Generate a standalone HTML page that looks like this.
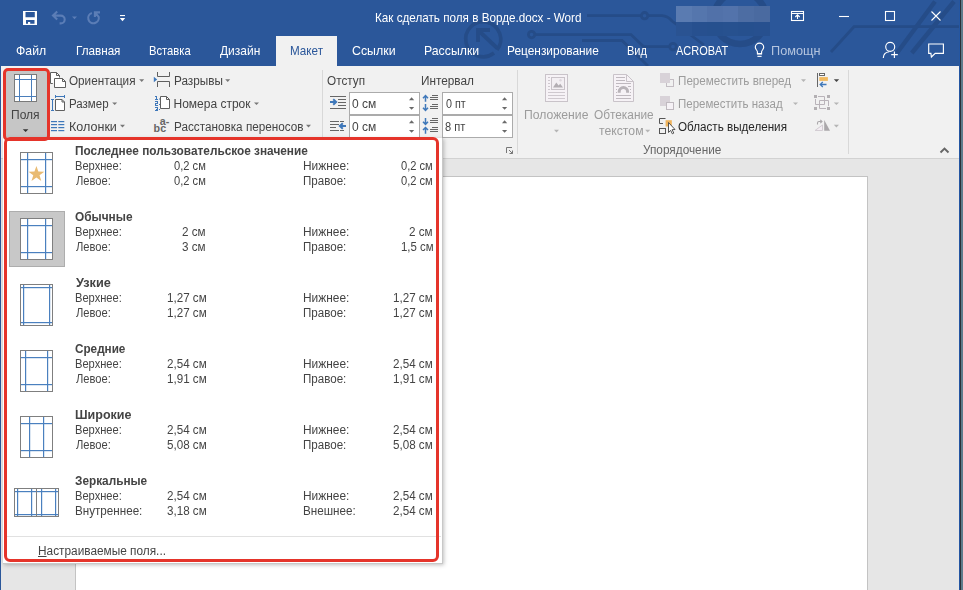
<!DOCTYPE html>
<html lang="ru">
<head>
<meta charset="utf-8">
<title>Как сделать поля в Ворде.docx - Word</title>
<style>
html,body{margin:0;padding:0;}
body{width:963px;height:590px;overflow:hidden;position:relative;background:#e6e6e6;font-family:"Liberation Sans",sans-serif;}
#bg,#fg{position:absolute;left:0;top:0;width:963px;height:590px;display:block;}
#txt{position:absolute;left:0;top:0;width:963px;height:590px;will-change:transform;}
.t{position:absolute;white-space:nowrap;transform-origin:0 0;}
.t u{text-decoration:underline;text-underline-offset:0.5px;}
#menu{position:absolute;left:3px;top:138px;width:440px;height:426px;background:#fff;box-shadow:1px 1px 4px rgba(0,0,0,.25);border-right:1px solid #c8c8c8;border-bottom:1px solid #c8c8c8;box-sizing:border-box;}
.red{position:absolute;border:3px solid #e5342a;box-sizing:border-box;}
</style>
</head>
<body>
<svg id="bg" width="963" height="590" viewBox="0 0 963 590">
<!-- title + tabs -->
<rect x="0" y="0" width="960" height="66" fill="#2b579a"/>
<g fill="none" stroke="#254c88" stroke-width="2.8">
  <path d="M497 50 A17.5 17.5 0 1 0 494 53" stroke-width="3.6"/>
  <path d="M497 48 L479 31 M478 42 V30 H490" stroke-width="3.8"/>
  <path d="M587 15.7 H641 M648 15.7 H662 Q667.500 16 672 21 L704 45"/>
  <circle cx="644.6" cy="15.7" r="3.2"/>
  <circle cx="531.6" cy="34.6" r="3.2"/>
  <path d="M535 34.6 H631 L643.500 46.600 H669.500"/>
  <circle cx="673" cy="46.600" r="3.300"/>
  <path d="M582 40.5 H622 L648 66"/>
  <circle cx="740" cy="18" r="26" stroke-width="6.500"/>
  <path d="M831 52 L854 26.7 H960"/>
  <path d="M935 1.500 L897 53 M954 1.500 L911.800 53" stroke-width="4.400"/>
</g>
<rect x="676.0" y="6" width="15.7" height="16.300" shape-rendering="crispEdges" fill="#5a7bb1"/><rect x="676.0" y="22.300" width="15.7" height="14" shape-rendering="crispEdges" fill="#2a5392"/>
<rect x="691.6" y="6" width="15.7" height="16.300" shape-rendering="crispEdges" fill="#5576ad"/><rect x="691.6" y="22.300" width="15.7" height="14" shape-rendering="crispEdges" fill="#27508f"/>
<rect x="707.2" y="6" width="15.7" height="16.300" shape-rendering="crispEdges" fill="#5171a9"/><rect x="707.2" y="22.300" width="15.7" height="14" shape-rendering="crispEdges" fill="#26508e"/>
<rect x="722.8" y="6" width="15.7" height="16.300" shape-rendering="crispEdges" fill="#5373ab"/><rect x="722.8" y="22.300" width="15.7" height="14" shape-rendering="crispEdges" fill="#27518f"/>
<rect x="738.4" y="6" width="15.7" height="16.300" shape-rendering="crispEdges" fill="#4d6da3"/><rect x="738.4" y="22.300" width="15.7" height="14" shape-rendering="crispEdges" fill="#26508e"/>
<rect x="754.0" y="6" width="15.7" height="16.300" shape-rendering="crispEdges" fill="#4a6aa0"/><rect x="754.0" y="22.300" width="15.7" height="14" shape-rendering="crispEdges" fill="#27508f"/>
<!-- active tab -->
<rect x="276" y="36" width="61" height="30" fill="#f1f1f1"/>
<!-- ribbon -->
<rect x="1" y="66" width="958" height="92" fill="#f1f1f1"/>
<rect x="1" y="158" width="958" height="1" fill="#d2d2d2"/>
<!-- doc area -->
<rect x="1" y="159" width="958" height="431" fill="#e6e6e6"/>
<rect x="75.5" y="176.5" width="792" height="420" fill="#fff" stroke="#c3c3c3"/>
<!-- window edges -->
<rect x="0" y="0" width="1" height="590" fill="#2b579a"/>
<rect x="959" y="0" width="1" height="590" fill="#2456a2"/>
<rect x="960" y="0" width="1" height="590" fill="#2b3038"/>
<rect x="961" y="0" width="2" height="590" fill="#5e7b8b"/>
<!-- quick access toolbar -->
<g fill="#fff">
  <path d="M23 11 H37 V25 H23 Z M25.5 12 V17.2 H34.8 V12 Z M26 20 V23.8 H34.5 V20 Z" fill-rule="evenodd"/>
  <rect x="28" y="22" width="2.2" height="2"/>
  <rect x="120" y="15" width="5" height="1.1"/>
  <path d="M119.8 18 H125.2 L122.5 21.2 Z"/>
</g>
<g fill="none" stroke="#5b7db6" stroke-width="2.1">
  <path d="M57.2 11.6 L53 15.6 L57.2 19.6 M53.6 15.6 H60.8 A3.9 3.9 0 0 1 60.8 23.4 H59.6"/>
  <path d="M91.9 12.9 A5.3 5.3 0 1 0 98.7 16.9 L95.4 13 M100 12.4 H94.9 V17"/>
</g>
<path d="M72 16.6 H77 L74.5 19.2 Z" fill="#5b7db6"/>
<!-- window controls -->
<g fill="none" stroke="#fff" stroke-width="1.1">
  <rect x="791.5" y="11.5" width="12" height="9"/>
  <path d="M791.5 13.5 H803.5 M797.5 19 V15 M795.3 17 L797.5 14.8 L799.7 17"/>
  <path d="M839 16.5 H849"/>
  <rect x="885.5" y="11.5" width="9" height="9"/>
  <path d="M931.5 11.5 L940.5 20.5 M940.5 11.5 L931.5 20.5"/>
</g>
<!-- tab row icons -->
<g fill="none" stroke="#fff" stroke-width="1.15">
  <path d="M757.4 53.2 V51.8 C757.4 50.300 755.300 49.500 755.300 47.300 A4.200 4.200 0 0 1 763.700 47.300 C763.700 49.500 761.600 50.300 761.600 51.800 V53.2"/>
  <circle cx="890.2" cy="46.8" r="4.5"/>
  <path d="M883.300 58 C883.400 54.200 885.800 52 889.200 51.700 M891.200 54.600 H897.800 M894.400 51.600 V58"/>
  <path d="M928.7 44 H943.4 V53.300 H935.2 L931.400 57 L930.900 53.300 H928.7 Z"/>
</g>
<g fill="#fff"><rect x="756.9" y="53" width="5.200" height="1.600"/><rect x="757.4" y="55.800" width="4.200" height="1.100"/></g>
<!-- Поля button -->
<rect x="6" y="71" width="41" height="66" fill="#c6c6c6"/>
<rect x="14.5" y="74.5" width="22" height="27" fill="#fff" stroke="#7a7a7a"/>
<g fill="#4a7ebb"><rect x="19" y="75" width="1" height="26"/><rect x="31" y="75" width="1" height="26"/><rect x="15" y="79" width="21" height="1"/><rect x="15" y="96" width="21" height="1"/></g>
<path d="M22.8 129.2 H28.4 L25.6 132 Z" fill="#333"/>
<!-- orientation -->
<g fill="#fff" stroke="#5f5f5f" stroke-width="1">
  <path d="M52.8 83.5 H50.5 V72.5 H56.5 L59.5 75.5 V77.5" />
  <path d="M56.5 72.5 V75.5 H59.5" fill="none"/>
  <path d="M54.5 78.5 H62.5 L65.5 81.5 V87.5 H54.5 Z"/>
  <path d="M62.5 78.5 V81.5 H65.5" fill="none"/>
</g>
<!-- size -->
<g fill="#fff" stroke="#5f5f5f" stroke-width="1">
  <path d="M55.5 99.5 H62 L64.5 102 V110.5 H55.5 Z"/>
  <path d="M62 99.5 V102 H64.5" fill="none"/>
</g>
<g fill="#3f78ba"><rect x="52" y="99" width="1" height="12"/><rect x="51" y="99" width="3" height="1"/><rect x="51" y="110" width="3" height="1"/>
<rect x="55" y="96" width="10" height="1"/><rect x="55" y="95" width="1" height="3"/><rect x="64" y="95" width="1" height="3"/></g>
<!-- columns -->
<g fill="#3f78ba">
<rect x="51" y="121" width="6" height="1.2"/><rect x="58.3" y="121" width="6" height="1.2"/>
<rect x="51" y="124" width="6" height="1.2"/><rect x="58.3" y="124" width="6" height="1.2"/>
<rect x="51" y="127" width="6" height="1.2"/><rect x="58.3" y="127" width="6" height="1.2"/>
<rect x="51" y="130" width="6" height="1.2"/><rect x="58.3" y="130" width="6" height="1.2"/>
</g>
<!-- dropdown arrows (dark gray) -->
<g fill="#777">
<path d="M139.2 79.3 H144.2 L141.7 82 Z"/>
<path d="M112.2 102.4 H117.2 L114.7 105.1 Z"/>
<path d="M120 124.8 H125 L122.5 127.5 Z"/>
<path d="M225.2 79.3 H230.2 L227.7 82 Z"/>
<path d="M254 102.4 H259 L256.5 105.1 Z"/>
<path d="M306 124.8 H311 L308.5 127.5 Z"/>
</g>
<!-- breaks -->
<g fill="none" stroke="#5f5f5f" stroke-width="1">
  <path d="M157.5 72 V76.5 H169.5 V72"/>
  <path d="M157.5 87 V81.5 H169.5 V87"/>
</g>
<path d="M153.8 76.8 L157.2 79.5 L153.8 82.2 Z" fill="#3f78ba"/>
<!-- line numbers -->
<g fill="#fff" stroke="#5f5f5f" stroke-width="1">
  <path d="M160.5 96.5 H166.5 L169.5 99.5 V108.5 H160.5 Z"/>
  <path d="M166.5 96.5 V99.5 H169.5" fill="none"/>
</g>
<g fill="#3f78ba">
<rect x="155" y="96" width="2" height="1"/><rect x="156" y="97" width="1" height="2"/><rect x="155" y="99" width="3" height="1"/>
<rect x="155" y="101" width="3" height="1"/><rect x="157" y="102" width="1" height="1"/><rect x="155" y="103" width="3" height="1"/><rect x="155" y="104" width="1" height="1"/><rect x="155" y="105" width="3" height="1"/>
<rect x="155" y="107" width="3" height="1"/><rect x="157" y="108" width="1" height="1"/><rect x="156" y="109" width="2" height="1"/><rect x="155" y="110" width="3" height="1"/>
<rect x="159" y="98.5" width="1" height="1"/><rect x="159" y="104" width="1" height="1"/><rect x="159" y="109" width="1" height="1"/>
</g>
<!-- hyphenation -->
<g font-family="Liberation Sans, sans-serif" fill="#666" font-weight="bold">
<text x="153.6" y="132" font-size="11.5" textLength="12.5" lengthAdjust="spacingAndGlyphs">bc</text>
<text x="159.8" y="125" font-size="10" textLength="9.5" lengthAdjust="spacingAndGlyphs">a-</text>
</g>
<!-- separators -->
<g fill="#d8d8d8">
<rect x="322" y="70" width="1" height="84"/>
<rect x="517" y="70" width="1" height="84"/>
<rect x="848" y="70" width="1" height="84"/>
</g>
<!-- indent inputs -->
<g fill="#fff" stroke="#ababab">
<rect x="349.5" y="92.5" width="70" height="22"/>
<rect x="349.5" y="115.5" width="70" height="22"/>
<rect x="442.5" y="92.5" width="70" height="22"/>
<rect x="442.5" y="115.5" width="70" height="22"/>
</g>
<g fill="#6a6a6a">
<path d="M409 100.2 H414.2 L411.6 97.3 Z"/><path d="M409 106.9 H414.2 L411.6 109.8 Z"/>
<path d="M409 123.2 H414.2 L411.6 120.3 Z"/><path d="M409 129.9 H414.2 L411.6 132.8 Z"/>
<path d="M502 100.2 H507.2 L504.6 97.3 Z"/><path d="M502 106.9 H507.2 L504.6 109.8 Z"/>
<path d="M502 123.2 H507.2 L504.6 120.3 Z"/><path d="M502 129.9 H507.2 L504.6 132.8 Z"/>
</g>
<!-- indent icons -->
<g fill="#666">
<rect x="330" y="96" width="16" height="1"/><rect x="338" y="99" width="8" height="1"/><rect x="338" y="102" width="8" height="1"/><rect x="338" y="105" width="8" height="1"/><rect x="330" y="108" width="16" height="1"/>
<rect x="330" y="121" width="9" height="1"/><rect x="340" y="121" width="4" height="1"/><rect x="330" y="124" width="9" height="1"/><rect x="330" y="127" width="6" height="1"/><rect x="330" y="130" width="9" height="1"/><rect x="340" y="130" width="4" height="1"/>
</g>
<g fill="none" stroke="#3f78ba" stroke-width="1.9">
<path d="M330 102 H336 M333.2 99.200 L336.200 102 L333.2 104.800"/>
<path d="M346 126 H340 M342.800 123.200 L339.800 126 L342.800 128.800"/>
</g>
<!-- spacing icons -->
<g fill="#666">
<rect x="432" y="95" width="6" height="1"/><rect x="430" y="97" width="8" height="1"/><rect x="430" y="99" width="8" height="1"/>
<rect x="432" y="104" width="6" height="1"/><rect x="430" y="106" width="8" height="1"/><rect x="430" y="108" width="8" height="1"/>
<rect x="432" y="118" width="6" height="1"/><rect x="430" y="120" width="8" height="1"/><rect x="430" y="122" width="8" height="1"/>
<rect x="432" y="127" width="6" height="1"/><rect x="430" y="129" width="8" height="1"/><rect x="430" y="131" width="8" height="1"/>
</g>
<g fill="none" stroke="#3f78ba" stroke-width="1.5">
<path d="M425.5 101.700 V95.500 M423 98.200 L425.5 95.600 L428 98.200"/>
<path d="M425.5 104 V110.500 M423 107.800 L425.5 110.400 L428 107.800"/>
<path d="M425.5 118 V124.400 M423 121.700 L425.5 124.300 L428 121.700"/>
<path d="M425.5 133.700 V127.400 M423 130.100 L425.5 127.500 L428 130.100"/>
</g>
<!-- dialog launcher -->
<g fill="none" stroke="#777" stroke-width="1">
<path d="M506.5 153 V147.5 H512"/>
<path d="M509 150 L512.5 153.5 M512.5 150.5 V153.5 H509.5"/>
</g>
<!-- Position icon -->
<g fill="none" stroke="#c9c3c9" stroke-width="1">
<rect x="545.5" y="74.5" width="22" height="27" fill="#f6f2f6"/>
<rect x="551.5" y="77.5" width="13" height="12" fill="#f3eff3"/>
<path d="M548 77.5 H550 M548 80.5 H550 M548 83.5 H550 M548 86.5 H550 M548 89.5 H550 M548 92.5 H565 M548 95.5 H565 M548 98.5 H565" stroke="#cfc9cf"/>
</g>
<path d="M553 87.5 L556.3 82.6 L558.6 85.6 L560.2 83.8 L563 87.5 Z" fill="#b3aeb3"/>
<circle cx="560.5" cy="80.3" r="1.2" fill="#ddd7dd"/>
<!-- Wrap icon -->
<g fill="none" stroke="#c9c3c9" stroke-width="1">
<path d="M613.5 74.5 H626.5 L633.5 81.500 V101.5 H613.5 Z" fill="#f6f2f6"/>
<path d="M626.5 74.5 V81.500 H633.5"/>
<path d="M616 77.5 H625 M616 80.5 H625 M616 83.5 H631 M616 95.500 H631 M616 98.5 H631 M616 86.5 H619 M628 86.5 H631 M616 89.5 H617 M630 89.5 H631 M616 92.5 H617 M630 92.5 H631" stroke="#bfb9bf"/>
</g>
<path d="M619.2 92.800 V91.800 A4.200 4.200 0 0 1 627.600 91.800 V92.800" fill="none" stroke="#b8b3b8" stroke-width="3"/>
<g fill="#b5b5b5">
<path d="M554 129.8 H559 L556.500 132.500 Z"/>
<path d="M645.2 129.8 H650.2 L647.7 132.500 Z"/>
<path d="M801 79.3 H806 L803.5 82 Z"/>
<path d="M793 102.400 H798 L795.5 105.1 Z"/>
<path d="M833.8 102.400 H839 L836.400 105.1 Z"/>
<path d="M833.8 124.800 H839 L836.400 127.5 Z"/>
</g>
<path d="M833.8 79.3 H839.200 L836.5 82 Z" fill="#444"/>
<!-- bring forward / send back -->
<rect x="666.5" y="79.500" width="7" height="7" fill="none" stroke="#c3bdc3"/>
<rect x="660" y="73" width="10" height="10" fill="#d8d2d8"/>
<rect x="660" y="96" width="10" height="10" fill="#d8d2d8"/>
<rect x="666.5" y="102.500" width="7" height="7" fill="#f6f2f6" stroke="#bfb9bf"/>
<!-- selection pane -->
<g fill="none" stroke="#555" stroke-width="1">
<path d="M665.500 118.5 H659.5 V123.5 H663"/>
<rect x="659.5" y="128.500" width="6" height="5"/>
</g>
<rect x="665.600" y="120.200" width="6.200" height="6.300" fill="#f0b45c"/>
<path d="M668.500 122.500 V132.500 L670.600 130.300 L672.300 133.800 L673.800 133.100 L672.100 129.700 L675 129.500 Z" fill="#fff" stroke="#444" stroke-width="0.900"/>
<!-- align -->
<rect x="817" y="73" width="1" height="14" fill="#666"/>
<rect x="819.5" y="73.500" width="5" height="2" fill="#fff" stroke="#666"/>
<rect x="819.300" y="77.100" width="8.600" height="3.800" fill="#f0b95f"/>
<path d="M826.500 84.500 H820.200 M822.800 82 L820.200 84.500 L822.800 87" fill="none" stroke="#3f78ba" stroke-width="1.300"/>
<!-- group -->
<g fill="#b3b0b3">
<rect x="814" y="95" width="3" height="3"/><rect x="827" y="95" width="3" height="3"/><rect x="814" y="107" width="3" height="3"/><rect x="827" y="107" width="3" height="3"/>
</g>
<g fill="none" stroke="#b9b3b9" stroke-width="1">
<path d="M818 96.500 H824.500 V104.500 H815.500 V99"/>
<path d="M826 108.500 H819.500 V100.500 H828.500 V106"/>
</g>
<!-- rotate -->
<path d="M824.200 120 L830 130.800 H824.200 Z" fill="#aaa7aa"/>
<path d="M822.500 125 V130.500 H815 Z" fill="#f3edf3" stroke="#d3cdd3"/>
<path d="M817.500 124.500 V123 Q817.500 121.500 819 121.500 H821.800 M820.300 119.800 L822 121.500 L820.300 123.200" fill="none" stroke="#aaa7aa" stroke-width="1.100"/>
<!-- collapse caret -->
<path d="M940.500 152.500 L944.500 148.500 L948.500 152.500" fill="none" stroke="#666" stroke-width="1.900"/>

</svg>
<div id="menu"></div>
<svg id="fg" width="963" height="590" viewBox="0 0 963 590">
<rect x="9.5" y="211.5" width="55" height="55" fill="#c8c8c8" stroke="#adadad"/>
<rect x="20.5" y="152.5" width="32" height="41" fill="#fff" stroke="#7f7f7f"/>
<rect x="27" y="153" width="1.2" height="40" fill="#4a80bf"/>
<rect x="45" y="153" width="1.2" height="40" fill="#4a80bf"/>
<rect x="21" y="159" width="31" height="1.2" fill="#4a80bf"/>
<rect x="21" y="186" width="31" height="1.2" fill="#4a80bf"/>
<rect x="20.5" y="218.5" width="32" height="41" fill="#fff" stroke="#7f7f7f"/>
<rect x="27" y="219" width="1.2" height="40" fill="#4a80bf"/>
<rect x="45" y="219" width="1.2" height="40" fill="#4a80bf"/>
<rect x="21" y="225" width="31" height="1.2" fill="#4a80bf"/>
<rect x="21" y="252" width="31" height="1.2" fill="#4a80bf"/>
<rect x="20.5" y="284.5" width="32" height="41" fill="#fff" stroke="#7f7f7f"/>
<rect x="23" y="285" width="1.2" height="40" fill="#4a80bf"/>
<rect x="49" y="285" width="1.2" height="40" fill="#4a80bf"/>
<rect x="21" y="287" width="31" height="1.2" fill="#4a80bf"/>
<rect x="21" y="322" width="31" height="1.2" fill="#4a80bf"/>
<rect x="20.5" y="350.5" width="32" height="41" fill="#fff" stroke="#7f7f7f"/>
<rect x="25" y="351" width="1.2" height="40" fill="#4a80bf"/>
<rect x="47" y="351" width="1.2" height="40" fill="#4a80bf"/>
<rect x="21" y="357" width="31" height="1.2" fill="#4a80bf"/>
<rect x="21" y="384" width="31" height="1.2" fill="#4a80bf"/>
<rect x="20.5" y="416.5" width="32" height="41" fill="#fff" stroke="#7f7f7f"/>
<rect x="29" y="417" width="1.2" height="40" fill="#4a80bf"/>
<rect x="43" y="417" width="1.2" height="40" fill="#4a80bf"/>
<rect x="21" y="423" width="31" height="1.2" fill="#4a80bf"/>
<rect x="21" y="450" width="31" height="1.2" fill="#4a80bf"/>
<rect x="14.5" y="488.5" width="44" height="28" fill="#fff" stroke="#7f7f7f"/>
<rect x="17" y="489" width="1.2" height="27" fill="#4a80bf"/>
<rect x="31" y="489" width="1.2" height="27" fill="#4a80bf"/>
<rect x="41" y="489" width="1.2" height="27" fill="#4a80bf"/>
<rect x="55" y="489" width="1.2" height="27" fill="#4a80bf"/>
<rect x="15" y="491" width="43" height="1.2" fill="#4a80bf"/>
<rect x="15" y="514" width="43" height="1.2" fill="#4a80bf"/>
<rect x="36" y="489" width="1" height="27" fill="#7f7f7f"/>
<polygon points="36.40,165.90 38.34,171.53 44.29,171.64 39.54,175.22 41.28,180.91 36.40,177.50 31.52,180.91 33.26,175.22 28.51,171.64 34.46,171.53" fill="#e9bb72"/>
<rect x="7" y="536" width="434" height="1" fill="#e1e1e1"/>
</svg>
<div id="txt">
<span class="t" style="left:375.00px;top:8.50px;font-size:13px;line-height:18px;color:#fff;transform:scaleX(0.8991);">Как сделать поля в Ворде.docx - Word</span>
<span class="t" style="left:15.50px;top:42.30px;font-size:13px;line-height:18px;color:#fff;transform:scaleX(0.9433);">Файл</span>
<span class="t" style="left:75.50px;top:42.30px;font-size:13px;line-height:18px;color:#fff;transform:scaleX(0.8983);">Главная</span>
<span class="t" style="left:148.50px;top:42.30px;font-size:13px;line-height:18px;color:#fff;transform:scaleX(0.8638);">Вставка</span>
<span class="t" style="left:220.00px;top:42.30px;font-size:13px;line-height:18px;color:#fff;transform:scaleX(0.9209);">Дизайн</span>
<span class="t" style="left:352.00px;top:42.30px;font-size:13px;line-height:18px;color:#fff;transform:scaleX(0.9516);">Ссылки</span>
<span class="t" style="left:423.50px;top:42.30px;font-size:13px;line-height:18px;color:#fff;transform:scaleX(0.9446);">Рассылки</span>
<span class="t" style="left:506.50px;top:42.30px;font-size:13px;line-height:18px;color:#fff;transform:scaleX(0.9154);">Рецензирование</span>
<span class="t" style="left:627.00px;top:42.30px;font-size:13px;line-height:18px;color:#fff;transform:scaleX(0.8455);">Вид</span>
<span class="t" style="left:676.00px;top:42.30px;font-size:13px;line-height:18px;color:#fff;transform:scaleX(0.8453);">ACROBAT</span>
<span class="t" style="left:289.50px;top:42.30px;font-size:13px;line-height:18px;color:#2b579a;transform:scaleX(0.8972);">Макет</span>
<span class="t" style="left:771.00px;top:42.30px;font-size:13px;line-height:18px;color:#b4c4de;transform:scaleX(0.9776);">Помощн</span>
<span class="t" style="left:11.00px;top:107.14px;font-size:12px;line-height:17px;color:#444;">Поля</span>
<span class="t" style="left:68.50px;top:73.14px;font-size:12px;line-height:17px;color:#444;transform:scaleX(0.9759);">Ориентация</span>
<span class="t" style="left:68.50px;top:96.24px;font-size:12px;line-height:17px;color:#444;transform:scaleX(0.9600);">Размер</span>
<span class="t" style="left:68.50px;top:118.64px;font-size:12px;line-height:17px;color:#444;transform:scaleX(1.0455);">Колонки</span>
<span class="t" style="left:173.50px;top:73.14px;font-size:12px;line-height:17px;color:#444;transform:scaleX(0.9792);">Разрывы</span>
<span class="t" style="left:173.50px;top:96.24px;font-size:12px;line-height:17px;color:#444;">Номера строк</span>
<span class="t" style="left:173.50px;top:118.64px;font-size:12px;line-height:17px;color:#444;transform:scaleX(0.9779);">Расстановка переносов</span>
<span class="t" style="left:327.00px;top:73.14px;font-size:12px;line-height:17px;color:#444;transform:scaleX(0.9787);">Отступ</span>
<span class="t" style="left:420.50px;top:73.14px;font-size:12px;line-height:17px;color:#444;transform:scaleX(0.9827);">Интервал</span>
<span class="t" style="left:352.00px;top:96.24px;font-size:12px;line-height:17px;color:#444;">0 см</span>
<span class="t" style="left:352.00px;top:118.64px;font-size:12px;line-height:17px;color:#444;">0 см</span>
<span class="t" style="left:445.50px;top:96.24px;font-size:12px;line-height:17px;color:#444;transform:scaleX(0.8961);">0 пт</span>
<span class="t" style="left:444.50px;top:118.64px;font-size:12px;line-height:17px;color:#444;transform:scaleX(0.9238);">8 пт</span>
<span class="t" style="left:524.00px;top:107.04px;font-size:12px;line-height:17px;color:#9c9c9c;transform:scaleX(1.0161);">Положение</span>
<span class="t" style="left:594.00px;top:107.04px;font-size:12px;line-height:17px;color:#9c9c9c;transform:scaleX(0.9865);">Обтекание</span>
<span class="t" style="left:598.50px;top:123.04px;font-size:12px;line-height:17px;color:#9c9c9c;transform:scaleX(1.0190);">текстом</span>
<span class="t" style="left:678.00px;top:73.14px;font-size:12px;line-height:17px;color:#9c9c9c;transform:scaleX(0.9713);">Переместить вперед</span>
<span class="t" style="left:678.00px;top:96.14px;font-size:12px;line-height:17px;color:#9c9c9c;transform:scaleX(0.9583);">Переместить назад</span>
<span class="t" style="left:678.00px;top:118.74px;font-size:12px;line-height:17px;color:#262626;transform:scaleX(0.9709);">Область выделения</span>
<span class="t" style="left:643.00px;top:141.84px;font-size:12px;line-height:17px;color:#666;transform:scaleX(0.9837);">Упорядочение</span>
<span class="t" style="left:74.50px;top:142.94px;font-size:12px;line-height:17px;color:#444;font-weight:700;transform:scaleX(0.9855);">Последнее пользовательское значение</span>
<span class="t" style="left:75.00px;top:158.24px;font-size:12px;line-height:17px;color:#444;transform:scaleX(0.9265);">Верхнее:</span>
<span class="t" style="left:174.00px;top:158.24px;font-size:12px;line-height:17px;color:#444;transform:scaleX(0.9277);">0,2 см</span>
<span class="t" style="left:302.50px;top:158.24px;font-size:12px;line-height:17px;color:#444;transform:scaleX(0.9916);">Нижнее:</span>
<span class="t" style="left:401.00px;top:158.24px;font-size:12px;line-height:17px;color:#444;transform:scaleX(0.9269);">0,2 см</span>
<span class="t" style="left:76.00px;top:173.14px;font-size:12px;line-height:17px;color:#444;transform:scaleX(0.9283);">Левое:</span>
<span class="t" style="left:174.00px;top:173.14px;font-size:12px;line-height:17px;color:#444;transform:scaleX(0.9277);">0,2 см</span>
<span class="t" style="left:302.50px;top:173.14px;font-size:12px;line-height:17px;color:#444;transform:scaleX(0.9651);">Правое:</span>
<span class="t" style="left:401.00px;top:173.14px;font-size:12px;line-height:17px;color:#444;transform:scaleX(0.9269);">0,2 см</span>
<span class="t" style="left:74.50px;top:208.94px;font-size:12px;line-height:17px;color:#444;font-weight:700;transform:scaleX(0.9895);">Обычные</span>
<span class="t" style="left:75.00px;top:224.24px;font-size:12px;line-height:17px;color:#444;transform:scaleX(0.9265);">Верхнее:</span>
<span class="t" style="left:181.50px;top:224.24px;font-size:12px;line-height:17px;color:#444;transform:scaleX(0.9739);">2 см</span>
<span class="t" style="left:302.50px;top:224.24px;font-size:12px;line-height:17px;color:#444;transform:scaleX(0.9916);">Нижнее:</span>
<span class="t" style="left:409.00px;top:224.24px;font-size:12px;line-height:17px;color:#444;transform:scaleX(0.9739);">2 см</span>
<span class="t" style="left:76.00px;top:239.14px;font-size:12px;line-height:17px;color:#444;transform:scaleX(0.9283);">Левое:</span>
<span class="t" style="left:181.50px;top:239.14px;font-size:12px;line-height:17px;color:#444;transform:scaleX(0.9739);">3 см</span>
<span class="t" style="left:302.50px;top:239.14px;font-size:12px;line-height:17px;color:#444;transform:scaleX(0.9651);">Правое:</span>
<span class="t" style="left:400.50px;top:239.14px;font-size:12px;line-height:17px;color:#444;transform:scaleX(0.9520);">1,5 см</span>
<span class="t" style="left:75.50px;top:274.94px;font-size:12px;line-height:17px;color:#444;font-weight:700;transform:scaleX(1.0594);">Узкие</span>
<span class="t" style="left:75.00px;top:290.24px;font-size:12px;line-height:17px;color:#444;transform:scaleX(0.9265);">Верхнее:</span>
<span class="t" style="left:166.50px;top:290.24px;font-size:12px;line-height:17px;color:#444;transform:scaleX(0.9692);">1,27 см</span>
<span class="t" style="left:302.50px;top:290.24px;font-size:12px;line-height:17px;color:#444;transform:scaleX(0.9916);">Нижнее:</span>
<span class="t" style="left:393.00px;top:290.24px;font-size:12px;line-height:17px;color:#444;transform:scaleX(0.9692);">1,27 см</span>
<span class="t" style="left:76.00px;top:305.14px;font-size:12px;line-height:17px;color:#444;transform:scaleX(0.9283);">Левое:</span>
<span class="t" style="left:166.50px;top:305.14px;font-size:12px;line-height:17px;color:#444;transform:scaleX(0.9692);">1,27 см</span>
<span class="t" style="left:302.50px;top:305.14px;font-size:12px;line-height:17px;color:#444;transform:scaleX(0.9651);">Правое:</span>
<span class="t" style="left:393.00px;top:305.14px;font-size:12px;line-height:17px;color:#444;transform:scaleX(0.9692);">1,27 см</span>
<span class="t" style="left:74.50px;top:340.94px;font-size:12px;line-height:17px;color:#444;font-weight:700;transform:scaleX(0.9768);">Средние</span>
<span class="t" style="left:75.00px;top:356.24px;font-size:12px;line-height:17px;color:#444;transform:scaleX(0.9265);">Верхнее:</span>
<span class="t" style="left:166.50px;top:356.24px;font-size:12px;line-height:17px;color:#444;transform:scaleX(0.9692);">2,54 см</span>
<span class="t" style="left:302.50px;top:356.24px;font-size:12px;line-height:17px;color:#444;transform:scaleX(0.9916);">Нижнее:</span>
<span class="t" style="left:393.00px;top:356.24px;font-size:12px;line-height:17px;color:#444;transform:scaleX(0.9692);">2,54 см</span>
<span class="t" style="left:76.00px;top:371.14px;font-size:12px;line-height:17px;color:#444;transform:scaleX(0.9283);">Левое:</span>
<span class="t" style="left:166.50px;top:371.14px;font-size:12px;line-height:17px;color:#444;transform:scaleX(0.9692);">1,91 см</span>
<span class="t" style="left:302.50px;top:371.14px;font-size:12px;line-height:17px;color:#444;transform:scaleX(0.9651);">Правое:</span>
<span class="t" style="left:393.00px;top:371.14px;font-size:12px;line-height:17px;color:#444;transform:scaleX(0.9692);">1,91 см</span>
<span class="t" style="left:74.50px;top:406.94px;font-size:12px;line-height:17px;color:#444;font-weight:700;transform:scaleX(1.0427);">Широкие</span>
<span class="t" style="left:75.00px;top:422.24px;font-size:12px;line-height:17px;color:#444;transform:scaleX(0.9265);">Верхнее:</span>
<span class="t" style="left:166.50px;top:422.24px;font-size:12px;line-height:17px;color:#444;transform:scaleX(0.9692);">2,54 см</span>
<span class="t" style="left:302.50px;top:422.24px;font-size:12px;line-height:17px;color:#444;transform:scaleX(0.9916);">Нижнее:</span>
<span class="t" style="left:393.00px;top:422.24px;font-size:12px;line-height:17px;color:#444;transform:scaleX(0.9692);">2,54 см</span>
<span class="t" style="left:76.00px;top:437.14px;font-size:12px;line-height:17px;color:#444;transform:scaleX(0.9283);">Левое:</span>
<span class="t" style="left:166.50px;top:437.14px;font-size:12px;line-height:17px;color:#444;transform:scaleX(0.9692);">5,08 см</span>
<span class="t" style="left:302.50px;top:437.14px;font-size:12px;line-height:17px;color:#444;transform:scaleX(0.9651);">Правое:</span>
<span class="t" style="left:393.00px;top:437.14px;font-size:12px;line-height:17px;color:#444;transform:scaleX(0.9692);">5,08 см</span>
<span class="t" style="left:74.50px;top:472.94px;font-size:12px;line-height:17px;color:#444;font-weight:700;transform:scaleX(0.9837);">Зеркальные</span>
<span class="t" style="left:75.00px;top:488.24px;font-size:12px;line-height:17px;color:#444;transform:scaleX(0.9265);">Верхнее:</span>
<span class="t" style="left:166.50px;top:488.24px;font-size:12px;line-height:17px;color:#444;transform:scaleX(0.9692);">2,54 см</span>
<span class="t" style="left:302.50px;top:488.24px;font-size:12px;line-height:17px;color:#444;transform:scaleX(0.9916);">Нижнее:</span>
<span class="t" style="left:393.00px;top:488.24px;font-size:12px;line-height:17px;color:#444;transform:scaleX(0.9692);">2,54 см</span>
<span class="t" style="left:75.00px;top:503.14px;font-size:12px;line-height:17px;color:#444;transform:scaleX(0.9701);">Внутреннее:</span>
<span class="t" style="left:166.50px;top:503.14px;font-size:12px;line-height:17px;color:#444;transform:scaleX(0.9692);">3,18 см</span>
<span class="t" style="left:302.50px;top:503.14px;font-size:12px;line-height:17px;color:#444;transform:scaleX(0.9712);">Внешнее:</span>
<span class="t" style="left:393.00px;top:503.14px;font-size:12px;line-height:17px;color:#444;transform:scaleX(0.9692);">2,54 см</span>
<span class="t" style="left:37.50px;top:542.64px;font-size:12px;line-height:17px;color:#444;transform:scaleX(0.9860);"><u>Н</u>астраиваемые поля...</span>
</div>
<div class="red" style="left:3px;top:68px;width:47px;height:72.5px;border-radius:5px;"></div>
<div class="red" style="left:4px;top:137px;width:435px;height:425px;border-radius:6px;"></div>
</body>
</html>
